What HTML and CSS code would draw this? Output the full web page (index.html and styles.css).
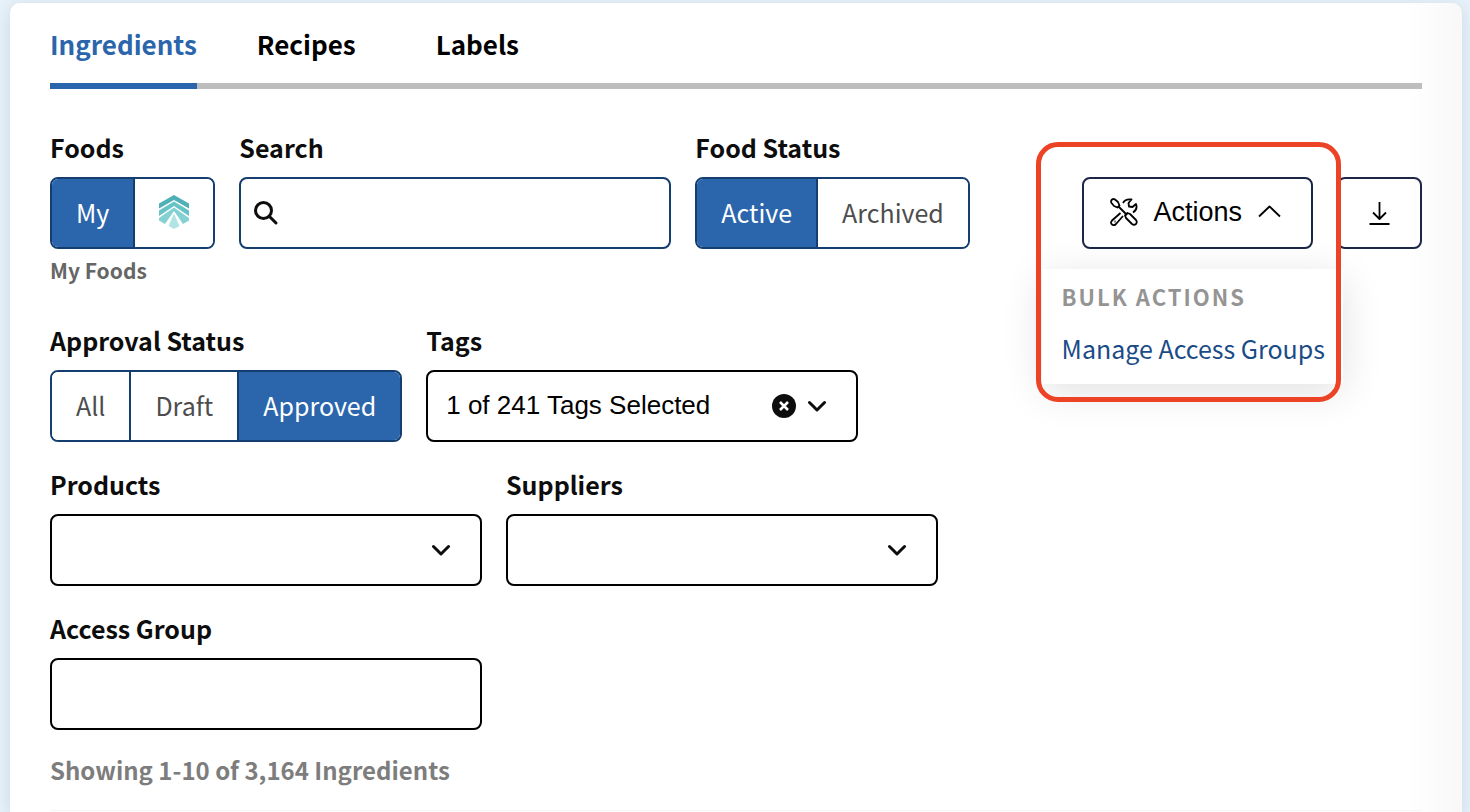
FILE: index.html
```html
<!DOCTYPE html>
<html lang="en">

<head>
    <meta charset="UTF-8">
    <meta name="viewport" content="width=device-width, initial-scale=1.0">
    <title>Ingredients</title>
    <link rel="stylesheet" href="styles.css">
</head>

<body>
    <main class="card">
        <nav class="tabs">
            <a class="tab active" href="#ingredients">Ingredients</a>
            <a class="tab" href="#recipes">Recipes</a>
            <a class="tab" href="#labels">Labels</a>
        </nav>

        <div class="toolbar">
            <!-- Filters -->
            <form class="filters">
                <div class="field" role="group" aria-labelledby="foodsLabel">
                    <span class="label" id="foodsLabel">Foods</span>
                    <div class="segmented">
                        <button type="button" class="segment selected">My</button>
                        <button type="button" class="segment" aria-label="Shared foods">
                            <svg width="30" height="34" viewBox="0 0 30 34">
                                <path fill="#4fb0b5" d="M15 0 30 8.5V13.5L15 5 0 13.5V8.5Z" />
                                <path fill="#66c3c6" d="M15 6.5 30 15.5V21L15 11 0 21V15.5Z" />
                                <path fill="#84d1d3" d="M15 12.5 30 23V25.5L24 29 15 16 6 29 0 25.5V23Z" />
                                <path fill="#b3e4e4" d="M15 18.5 20.5 31 15 34 9.5 31Z" />
                            </svg>
                        </button>
                    </div>
                    <span class="helper">My Foods</span>
                </div>

                <div class="field">
                    <label class="label" for="search">Search</label>
                    <div class="control">
                        <input class="box search-box" type="text" id="search">
                        <svg class="search-icon" width="26" height="26" viewBox="0 0 26 26">
                            <circle cx="10.5" cy="10.5" r="8" />
                            <path d="M16.5 16.5 23 23" />
                        </svg>
                    </div>
                </div>

                <div class="field" role="group" aria-labelledby="statusLabel">
                    <span class="label" id="statusLabel">Food Status</span>
                    <div class="segmented">
                        <button type="button" class="segment selected">Active</button>
                        <button type="button" class="segment">Archived</button>
                    </div>
                </div>

                <div class="field" role="group" aria-labelledby="approvalLabel">
                    <span class="label" id="approvalLabel">Approval Status</span>
                    <div class="segmented">
                        <button type="button" class="segment">All</button>
                        <button type="button" class="segment">Draft</button>
                        <button type="button" class="segment selected">Approved</button>
                    </div>
                </div>

                <div class="field">
                    <label class="label" for="tags">Tags</label>
                    <div class="control">
                        <select class="box dark" id="tags">
                            <option>1 of 241 Tags Selected</option>
                        </select>
                        <div class="box-icons">
                            <button type="button" class="clear-button" aria-label="Clear tags">
                                <svg width="24" height="24" viewBox="0 0 24 24">
                                    <circle cx="12" cy="12" r="12" fill="#0d0d0d" />
                                    <path stroke="#fff" stroke-width="2.5" d="M8 8 16 16M16 8 8 16" />
                                </svg>
                            </button>
                            <svg class="chevron" width="18" height="12" viewBox="0 0 18 12">
                                <path d="M1.5 2.5 9 10 16.5 2.5" />
                            </svg>
                        </div>
                    </div>
                </div>

                <div class="field">
                    <label class="label" for="products">Products</label>
                    <div class="control">
                        <select class="box dark" id="products">
                            <option></option>
                        </select>
                        <div class="box-icons">
                            <svg class="chevron" width="18" height="12" viewBox="0 0 18 12">
                                <path d="M1.5 2.5 9 10 16.5 2.5" />
                            </svg>
                        </div>
                    </div>
                </div>

                <div class="field">
                    <label class="label" for="suppliers">Suppliers</label>
                    <div class="control">
                        <select class="box dark" id="suppliers">
                            <option></option>
                        </select>
                        <div class="box-icons">
                            <svg class="chevron" width="18" height="12" viewBox="0 0 18 12">
                                <path d="M1.5 2.5 9 10 16.5 2.5" />
                            </svg>
                        </div>
                    </div>
                </div>

                <div class="field">
                    <label class="label" for="accessGroup">Access Group</label>
                    <div class="control">
                        <input class="box dark" type="text" id="accessGroup">
                    </div>
                </div>
            </form>

            <!-- Actions -->
            <div class="actions">
                <div class="dropdown">
                    <button type="button" class="action-button" aria-expanded="true">
                        <svg class="line-icon" width="28" height="28" viewBox="0 0 28 28">
                            <path d="M2 1.5Q3.5 .5 5 1.5L8 4 9.5 7.5 7.5 9.5 4 8 1.5 5Q.5 3 2 1.5Z" />
                            <path d="M8.5 8.5 17 17" />
                            <path d="M15 17.5 17.5 15 20 16 26 22Q27.500 24 26 26 24 27.5 22 26L16 20Z" />
                            <path d="M13 5Q15.500 .5 21.500 1.5L18.500 5 19 8.5 22.500 9 26 6Q28 11.500 23 14.500" />
                            <path d="M10.5 15 2 22.5Q0 25 2 26.5 4 28 6 26L13 18" />
                            <path d="M4.5 23.5H5.500" />
                        </svg>
                        Actions
                        <svg class="line-icon" width="24" height="16" viewBox="0 0 24 16">
                            <path d="M2 12.5 12.5 2.500 23 12.5" />
                        </svg>
                    </button>
                    <div class="menu">
                        <h2 class="menu-title">Bulk Actions</h2>
                        <a class="menu-link" href="#access-groups">Manage Access Groups</a>
                    </div>
                    <div class="highlight"></div>
                </div>
                <button type="button" class="action-button download" aria-label="Download">
                    <svg class="line-icon" width="21" height="26" viewBox="0 0 21 26">
                        <path d="M10.5 2V19M4 12.5 10.5 19 17 12.5M.5 24H20.5" />
                    </svg>
                </button>
            </div>
        </div>

        <p class="count">Showing 1-10 of 3,164 Ingredients</p>
        <hr class="divider">
    </main>
</body>

</html>
```

FILE: styles.css
```css
* {
    box-sizing: border-box;
}

body {
    margin: 0;
    min-height: 100vh;
    padding: 3px 8px 0 10px;
    display: flex;
    background-color: #e6f1f9;
    font-family: "Noto Sans CJK SC", "Source Sans Pro", sans-serif;
    font-size: 25px;
    color: #0d0d0d;
}

.card {
    flex: 1;
    padding: 0 40px;
    border-radius: 10px 10px 0 0;
    background: linear-gradient(to left, #f8f8f8, #fff 56px);
    box-shadow: 0 4px 16px rgba(0, 40, 80, 0.12);
}

/* Tabs */
.tabs {
    display: flex;
    gap: 80px;
    box-shadow: inset 0 -6px #bdbdbd;
}

.tab {
    height: 86px;
    padding-top: 21px;
    line-height: 40px;
    font-size: 26px;
    font-weight: bold;
    color: #000;
    text-decoration: none;
}

.tab.active {
    margin-right: -20px;
    color: #2b66ac;
    border-bottom: 6px solid #2b66ac;
}

/* Filters */
.toolbar {
    display: flex;
    gap: 24px;
    padding-top: 40px;
}

.filters {
    flex: 1;
    display: flex;
    flex-wrap: wrap;
    align-items: flex-start;
    gap: 24px;
}

.label {
    display: block;
    margin-bottom: 12px;
    line-height: 36px;
    font-weight: bold;
}

.helper {
    display: block;
    margin: 5px 0 12px;
    line-height: 32px;
    font-size: 21px;
    font-weight: bold;
    color: #666;
}

.segmented {
    display: flex;
    height: 72px;
    border: 2px solid #153e70;
    border-radius: 8px;
    overflow: hidden;
}

.segment {
    display: flex;
    align-items: center;
    padding: 0 24px 2px;
    border: none;
    background-color: #fff;
    font-family: inherit;
    font-size: 25px;
    color: #4d4d4d;
    cursor: pointer;
}

.segment + .segment {
    border-left: 2px solid #153e70;
}

.segment.selected {
    background-color: #2b66ac;
    color: #fff;
}

.control {
    position: relative;
}

.box {
    display: block;
    width: 432px;
    height: 72px;
    padding: 0 18px 2px;
    border: 2px solid #153e70;
    border-radius: 8px;
    appearance: none;
    background-color: #fff;
    font-family: "Liberation Sans", Arial, sans-serif;
    font-size: 26px;
    color: #000;
}

.box.dark {
    border-color: #000;
}

.search-box {
    padding-left: 52px;
}

.search-icon {
    position: absolute;
    top: 23px;
    left: 14px;
    fill: none;
    stroke: #0d0d0d;
    stroke-width: 3;
    stroke-linecap: round;
}

.box-icons {
    position: absolute;
    top: 0;
    right: 32px;
    height: 72px;
    display: flex;
    align-items: center;
    gap: 12px;
    pointer-events: none;
}

.clear-button {
    display: flex;
    padding: 0;
    border: none;
    background: none;
    pointer-events: auto;
    cursor: pointer;
}

.chevron {
    fill: none;
    stroke: #0d0d0d;
    stroke-width: 3;
    stroke-linecap: round;
    stroke-linejoin: round;
}

/* Actions */
.actions {
    display: flex;
    align-items: flex-start;
    gap: 24px;
    padding-top: 48px;
}

.dropdown {
    position: relative;
}

.action-button {
    display: flex;
    align-items: center;
    gap: 15px;
    height: 72px;
    padding: 0 30px 2px 26px;
    border: 2px solid #1c2748;
    border-radius: 8px;
    background-color: transparent;
    font-family: "Liberation Sans", Arial, sans-serif;
    font-size: 27px;
    color: #000;
    cursor: pointer;
}

.action-button.download {
    padding: 0 30px;
}

.line-icon {
    fill: none;
    stroke: #000;
    stroke-width: 1.8;
    stroke-linejoin: round;
}

.menu {
    position: absolute;
    top: 92px;
    right: -30px;
    padding: 7px 18px 16px 20px;
    background-color: #fff;
    box-shadow: 0 8px 40px rgba(0, 0, 0, 0.12);
    white-space: nowrap;
    z-index: 1;
}

.menu-title {
    margin: 0 0 12px;
    line-height: 40px;
    font-size: 22px;
    letter-spacing: 2px;
    text-transform: uppercase;
    color: #949494;
}

.menu-link {
    display: block;
    line-height: 40px;
    color: #1b4b87;
    text-decoration: none;
}

/* Red outline around the open menu */
.highlight {
    position: absolute;
    top: -35px;
    right: -28px;
    bottom: -153px;
    left: -46px;
    border: 5px solid #ec4226;
    border-radius: 22px;
    pointer-events: none;
    z-index: 2;
}

.count {
    margin: 20px 0;
    line-height: 40px;
    font-size: 24px;
    font-weight: bold;
    color: #7d7d7d;
}

.divider {
    margin: 0;
    border: none;
    border-top: 1px solid #f5f5f5;
}
```
